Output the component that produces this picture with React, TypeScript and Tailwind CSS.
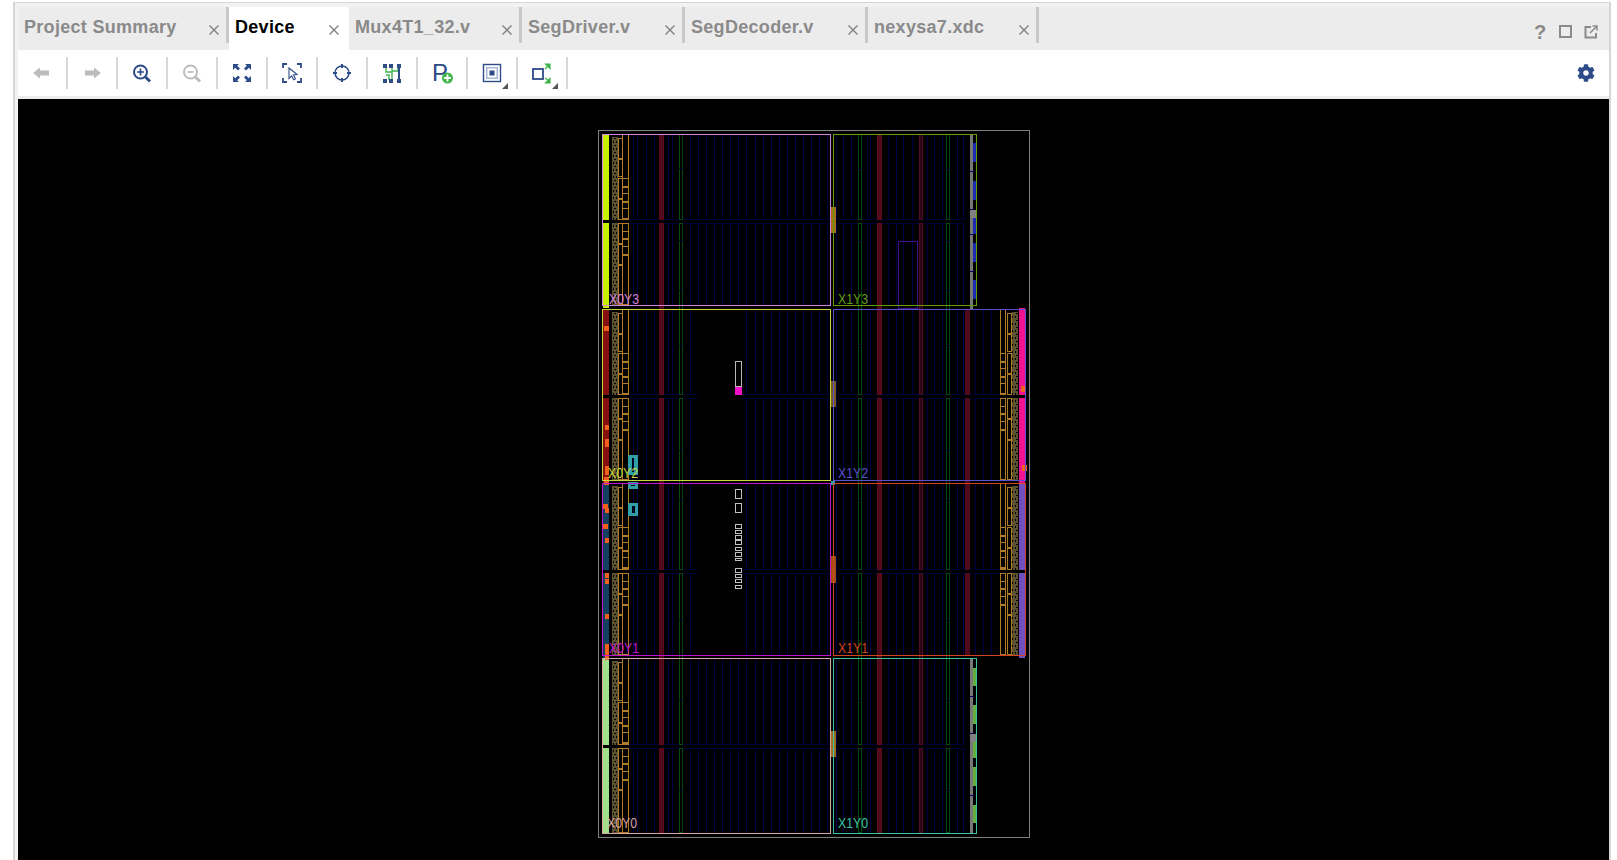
import { FaCog } from "react-icons/fa"

const NAVY = "#2d4b87"
const GRAY = "#bcbcbc"
const GREEN = "#3fb54a"

const tabs = [
  { name: "Project Summary", w: "w-[211px]", active: false, sep: true },
  { name: "Device", w: "w-[120px]", active: true, sep: false },
  { name: "Mux4T1_32.v", w: "w-[173px]", active: false, sep: true },
  { name: "SegDriver.v", w: "w-[163px]", active: false, sep: true },
  { name: "SegDecoder.v", w: "w-[183px]", active: false, sep: true },
  { name: "nexysa7.xdc", w: "w-[171px]", active: false, sep: true },
]

function CloseIcon() {
  return (
    <svg width="12" height="12" viewBox="0 0 12 12" className="mt-[6px] shrink-0">
      <path d="M1.5 1.5l9 9M10.5 1.5l-9 9" stroke="#808080" strokeWidth="1.4" />
    </svg>
  )
}

function Tab({ name, w, active, sep }: { name: string; w: string; active: boolean; sep: boolean }) {
  return (
    <div className={`flex ${w} shrink-0 ${active ? "h-[43px] bg-white pr-[9px]" : "h-[36px] pr-[6px]"} ${sep ? "border-r-[3px] border-[#c8c8c8]" : ""} items-start justify-between pl-[6px] pt-[11px]`}>
      <span className={`text-[18px] font-bold leading-none tracking-[0.3px] ${active ? "text-black" : "text-[#8a8a8a]"}`}>{name}</span>
      <CloseIcon />
    </div>
  )
}

function Icon({ children }: { children: React.ReactNode }) {
  return (
    <svg width="30" height="30" viewBox="-3 -3 30 30">
      {children}
    </svg>
  )
}

function ToolButton({ children, menu }: { children: React.ReactNode; menu?: boolean }) {
  return (
    <div className="relative flex h-[32px] w-[50px] shrink-0 items-center justify-center border-r-2 border-[#d8d8d8]">
      {children}
      {menu && <div className="absolute bottom-0 right-[8px] h-0 w-0 border-b-[6px] border-l-[6px] border-b-[#555555] border-l-transparent" />}
    </div>
  )
}

const toolbarIcons = [
  { menu: false, el: <path d="M3 12l7-5.5V9.5h9v5h-9v3z" fill={GRAY} /> },
  { menu: false, el: <path d="M21 12l-7-5.5V9.5H5v5h9v3z" fill={GRAY} /> },
  {
    menu: false,
    el: (
      <>
        <circle cx="10.5" cy="11" r="6.5" fill="none" stroke={NAVY} strokeWidth="2" />
        <path d="M10.5 7.5v7M7 11h7" stroke={NAVY} strokeWidth="1.7" />
        <path d="M15.5 16l4.5 4.5" stroke={NAVY} strokeWidth="3" />
      </>
    ),
  },
  {
    menu: false,
    el: (
      <>
        <circle cx="10.5" cy="11" r="6.5" fill="none" stroke={GRAY} strokeWidth="2" />
        <path d="M7.5 11h6" stroke={GRAY} strokeWidth="1.7" />
        <path d="M15.5 16l4.5 4.5" stroke={GRAY} strokeWidth="3" />
      </>
    ),
  },
  {
    menu: false,
    el: (
      <path
        d="M3 3h6L7.2 4.8 10 7.6 8 9.6 5.2 6.8 3 9zM21 3v6l-2.2-2.2L16 9.6l-2-2 2.8-2.8L15 3zM3 21v-6l2.2 2.2L8 14.4l2 2-2.8 2.8L9 21zM21 21h-6l1.8-1.8-2.8-2.8 2-2 2.8 2.8L21 15z"
        fill={NAVY}
      />
    ),
  },
  {
    menu: false,
    el: (
      <>
        <path d="M3 7V3h4M17 3h4v4M3 17v4h4M21 17v4h-4" fill="none" stroke={NAVY} strokeWidth="1.8" />
        <path d="M9 7l8 6.5-3.5.5 2 3.8-1.8.9-2-3.8L9 17.5z" fill="white" stroke={NAVY} strokeWidth="1.1" />
      </>
    ),
  },
  {
    menu: false,
    el: (
      <>
        <circle cx="12" cy="12" r="7" fill="none" stroke={NAVY} strokeWidth="1.5" />
        <path d="M12 3v4M12 17v4M3 12h4M17 12h4" stroke={NAVY} strokeWidth="2" />
      </>
    ),
  },
  {
    menu: false,
    el: (
      <>
        <path d="M6 6v5h6v8M12 6v4h6V6M6 14h3v5" fill="none" stroke={GREEN} strokeWidth="1.4" />
        <path d="M3 3h4v4H3zM9 3h4v4H9zM17 3h4v4h-4zM3 18h4v4H3zM9 18h4v4H9zM17 18h4v4h-4z" fill={NAVY} />
        <path d="M19 7v11" stroke={NAVY} strokeWidth="2" />
      </>
    ),
  },
  {
    menu: false,
    el: (
      <>
        <text x="2" y="20" fontSize="24" fontFamily="Liberation Sans, sans-serif" fill={NAVY}>P</text>
        <circle cx="17.5" cy="17" r="5.5" fill={GREEN} />
        <path d="M17.5 13.5v7M14 17h7" stroke="white" strokeWidth="1.8" />
      </>
    ),
  },
  {
    menu: true,
    el: (
      <>
        <rect x="3.5" y="3.5" width="17" height="17" fill="white" stroke={NAVY} strokeWidth="1.4" />
        <rect x="6" y="6" width="12" height="12" fill="#a8b8d4" />
        <rect x="7.5" y="7.5" width="9" height="9" fill="white" />
        <rect x="9.5" y="9.5" width="5" height="5" fill={NAVY} />
      </>
    ),
  },
  {
    menu: true,
    el: (
      <>
        <rect x="3" y="8" width="10" height="10" fill="white" stroke={NAVY} strokeWidth="1.8" />
        <path d="M15 8l4-4M20 3v4.5L15.5 3zM15 17l4 3M20 22v-4.5L15.5 22z" fill={GREEN} stroke={GREEN} strokeWidth="1.2" />
      </>
    ),
  },
]

// clock region outlines, in page coordinates
const regions = [
  { label: "X0Y3", x: 602.5, y: 134.5, w: 228, h: 171, color: "#d184da", tx: 609, ty: 304 },
  { label: "X1Y3", x: 833.5, y: 134.5, w: 143, h: 171, color: "#629c0c", tx: 838, ty: 304 },
  { label: "X0Y2", x: 602.5, y: 309.5, w: 228, h: 171, color: "#c8d83c", tx: 608, ty: 478 },
  { label: "X1Y2", x: 833.5, y: 309.5, w: 192, h: 171, color: "#5a50cc", tx: 838, ty: 478 },
  { label: "X0Y1", x: 602.5, y: 483.5, w: 228, h: 172, color: "#c214cf", tx: 609, ty: 653 },
  { label: "X1Y1", x: 833.5, y: 483.5, w: 192, h: 172, color: "#d2431f", tx: 838, ty: 653 },
  { label: "X0Y0", x: 602.5, y: 658.5, w: 228, h: 175, color: "#dba4a4", tx: 607, ty: 828 },
  { label: "X1Y0", x: 833.5, y: 658.5, w: 143, h: 175, color: "#3cc0a2", tx: 838, ty: 828 },
]

const spans = [
  [134, 220],
  [223, 395],
  [398, 570],
  [573, 745],
  [748, 833],
]
const halves = [
  [134, 220, 223, 305],
  [309, 395, 398, 480],
  [483, 570, 573, 655],
  [658, 745, 748, 833],
]

const leftLines = [633, 637, 646, 654, 668, 672, 690, 698, 706, 714, 722, 730, 738, 746, 755, 763, 771, 779, 787, 795, 803, 811, 819, 827]
const rightLines = [836, 843, 851, 867, 870, 888, 896, 903, 912, 927, 934, 942, 957, 963]
const farLines = [975, 983, 991]

const stripColors = ["#c8f000", "#851010", "#124060", "#a0e088"]
const orangeDotsLeft = [
  [604, 326, 5, 5],
  [605, 425, 4, 5],
  [605, 439, 4, 8],
  [605, 466, 4, 9],
  [604, 477, 5, 8],
  [603, 504, 5, 5],
  [605, 508, 4, 5],
  [603, 524, 5, 5],
  [605, 538, 4, 5],
  [605, 573, 4, 5],
  [605, 579, 4, 5],
  [605, 614, 4, 5],
  [605, 644, 4, 16],
]
const smallBoxes = [
  [489, 10],
  [503, 10],
  [524, 5],
  [530, 4],
  [535, 5],
  [540, 5],
  [547, 4],
  [552, 5],
  [558, 3],
  [568, 5],
  [574, 4],
  [579, 4],
  [585, 4],
]

function Column({ x, w, fill, stroke }: { x: number; w: number; fill: string; stroke: string }) {
  return (
    <>
      {spans.map(([a, b]) => (
        <rect key={a} x={x + 0.5} y={a + 0.5} width={w - 1} height={b - a - 1} fill={fill} stroke={stroke} />
      ))}
    </>
  )
}

function GreenColumn({ x }: { x: number }) {
  const breaks = [168, 240, 290, 345, 450, 500, 620, 700, 790]
  return (
    <>
      <Column x={x} w={4} fill="#000000" stroke="#004a12" />
      {breaks.map((y) => (
        <rect key={y} x={x} y={y} width={4} height={1} fill="#00002e" />
      ))}
    </>
  )
}

// orange slice columns and the olive tile column of one half, top and bottom variants
function SliceColumns({ a, b, c, d, col1, col2, col2w, olive }: { a: number; b: number; c: number; d: number; col1: number; col2: number; col2w: number; olive: number }) {
  const orange = "#b07c28"
  const ticksTop = [a + 52, a + 59, a + 67, a + 74, a + 84]
  const ticksBottom = [c + 8, c + 15, c + 23, c + 31]
  return (
    <g fill="none" stroke={orange}>
      <rect x={olive} y={a + 3} width={6} height={b - a - 3} fill="url(#olive)" stroke="none" />
      <rect x={olive} y={c} width={6} height={d - c} fill="url(#olive)" stroke="none" />
      <rect x={col1 + 0.5} y={a + 4.5} width={4} height={38} />
      <rect x={col1 + 0.5} y={a + 44.5} width={4} height={b - a - 45} />
      <path d={`M${col1} ${a + 24.5}h4M${col1} ${a + 64.5}h4`} strokeWidth="2" />
      <rect x={col1 + 0.5} y={c + 0.5} width={4} height={20} />
      <rect x={col1 + 0.5} y={c + 21.5} width={4} height={20} />
      <rect x={col1 + 0.5} y={c + 42.5} width={4} height={d - c - 43} />
      <rect x={col2 + 0.5} y={a + 0.5} width={col2w - 1} height={44} />
      <rect x={col2 + 0.5} y={a + 44.5} width={col2w - 1} height={b - a - 45} />
      {ticksTop.map((y, i) => (
        <path key={y} d={`M${col2} ${y + 0.5}h${col2w}`} strokeWidth={i % 2 ? 1 : 2} />
      ))}
      <rect x={col2 + 0.5} y={c + 0.5} width={col2w - 1} height={d - c - 1} />
      {ticksBottom.map((y, i) => (
        <path key={y} d={`M${col2} ${y + 0.5}h${col2w}`} strokeWidth={i % 2 ? 2 : 1} />
      ))}
    </g>
  )
}

function DeviceView() {
  return (
    <svg width="1591" height="761" viewBox="18 99 1591 761" shapeRendering="crispEdges" className="block">
      <defs>
        <pattern id="olive" x="0" y="0" width="6" height="7" patternUnits="userSpaceOnUse">
          <rect width="6" height="7" fill="#5c5230" />
          <rect x="1" y="1" width="1" height="2" fill="#000000" />
          <rect x="4" y="1" width="1" height="2" fill="#000000" />
          <rect x="2" y="5" width="2" height="1" fill="#000000" />
        </pattern>
      </defs>

      <rect x="598.5" y="130.5" width="431" height="707" fill="none" stroke="#808080" />

      {/* routing lines, with a hole around the config column */}
      {halves.map(([a, b, c, d], i) => {
        const hole = i === 1 || i === 2
        const x1Lines = hole ? [...rightLines, ...farLines] : rightLines
        const lines = [...leftLines.filter((x) => !hole || x < 697 || x > 742), ...x1Lines]
        const end = hole ? 1000 : 965
        return (
          <g key={a} stroke="#000048">
            {lines.map((x) => (
              <path key={x} d={`M${x + 0.5} ${a}V${b}M${x + 0.5} ${c}V${d}`} />
            ))}
            <path d={`M612 ${b - 0.5}H${hole ? 697 : end}`} stroke="#000038" />
            <path d={`M612 ${c + 0.5}H${hole ? 697 : end}`} stroke="#000038" />
            {hole && <path d={`M742 ${b - 0.5}H${end}M742 ${c + 0.5}H${end}`} stroke="#000038" />}
          </g>
        )
      })}

      <Column x={659} w={5} fill="#4f0a1c" stroke="#5e0a1e" />
      <Column x={877} w={5} fill="#4f0a1c" stroke="#5e0a1e" />
      <Column x={919} w={4} fill="#2a0618" stroke="#4f0a24" />
      <GreenColumn x={679} />
      <GreenColumn x={858} />
      <GreenColumn x={946} />
      {[[309, 395], [398, 570], [573, 655]].map(([a, b]) => (
        <rect key={a} x={965} y={a} width={5} height={b - a} fill="#4f0a1c" />
      ))}

      {/* left IO strips */}
      {halves.map(([a, b, c, d], i) => (
        <g key={a}>
          <rect x={603} y={a} width={6} height={b - a} fill={stripColors[i]} />
          <rect x={603} y={c} width={6} height={i === 3 ? d - c : d - c + 3} fill={stripColors[i]} />
          <SliceColumns a={a} b={b} c={c} d={d} col1={618} col2={622} col2w={7} olive={612} />
        </g>
      ))}

      {/* right IO columns of X1Y2 and X1Y1 */}
      {halves.slice(1, 3).map(([a, b, c, d], i) => (
        <g key={a}>
          <rect x={1019} y={a - 1} width={6} height={b - a + 1} fill={i === 0 ? "#f01392" : "#7050c0"} />
          <rect x={1019} y={c} width={6} height={d - c + 3} fill={i === 0 ? "#f01392" : "#7050c0"} />
          <SliceColumns a={a} b={b} c={c} d={d} col1={1007} col2={1000} col2w={6} olive={1012} />
        </g>
      ))}
      <rect x="1019" y="481" width="6" height="2" fill="#f01392" />
      <rect x="1021" y="386" width="5" height="6" fill="#f0601a" />
      <rect x="1022" y="465" width="5" height="6" fill="#f0601a" />

      {/* right edge columns of X1Y3 and X1Y0 */}
      <rect x="970" y="135" width="3" height="175" fill="#787878" />
      {[[143, 19], [181, 19], [218, 16], [243, 19], [280, 19]].map(([y, h]) => (
        <rect key={y} x={973} y={y} width={3} height={h} fill="#1c2cb0" />
      ))}
      <rect x="970" y="210" width="6" height="8" fill="#808080" />
      {[171, 209, 234, 271].map((y) => (
        <rect key={y} x={970} y={y} width={4} height={1} fill="#000060" />
      ))}
      <rect x="970" y="659" width="3" height="174" fill="#787878" />
      {[[668, 18], [705, 19], [742, 16], [767, 19], [805, 18]].map(([y, h]) => (
        <rect key={y} x={973} y={y} width={3} height={h} fill="#60b040" />
      ))}
      <rect x="970" y="734" width="6" height="8" fill="#808080" />
      {[696, 733, 795].map((y) => (
        <rect key={y} x={970} y={y} width={4} height={1} fill="#000060" />
      ))}

      {/* clock spine blocks */}
      <rect x="831" y="207" width="5" height="26" fill="#a87018" />
      <rect x="831" y="381" width="5" height="26" fill="#7a5c20" />
      <rect x="831" y="556" width="5" height="27" fill="#a05010" />
      <rect x="831" y="731" width="5" height="26" fill="#a07020" />

      {/* teal blocks */}
      <path d="M628 455h10v20h-10zM632 458v14h2v-14z" fill="#2f9ea6" fillRule="evenodd" />
      <rect x="628" y="482" width="10" height="7" fill="#2f9ea6" />
      <rect x="631" y="485" width="4" height="1" fill="#000000" />
      <path d="M628 503h10v13h-10zM632 506v7h3v-7z" fill="#2f9ea6" fillRule="evenodd" />
      <rect x="831" y="481" width="4" height="4" fill="#2f9ea6" />

      {orangeDotsLeft.map(([x, y, w, h]) => (
        <rect key={`${x}-${y}`} x={x} y={y} width={w} height={h} fill="#f0601a" />
      ))}

      {/* placed cells */}
      <rect x="735.5" y="361.5" width="6" height="25" fill="none" stroke="#b8b8b8" />
      <rect x="735" y="387" width="7" height="8" fill="#f010c8" />
      {smallBoxes.map(([y, h]) => (
        <rect key={y} x={735.5} y={y + 0.5} width={6} height={h - 1} fill="none" stroke="#c0c0c0" />
      ))}
      <rect x="898.5" y="241.5" width="19" height="67" fill="none" stroke="#44108a" />

      {regions.map((r) => (
        <rect key={r.label} x={r.x} y={r.y} width={r.w} height={r.h} fill="none" stroke={r.color} />
      ))}
      {regions.map((r) => (
        <text key={r.label} x={r.tx} y={r.ty} fill={r.color} fontSize="14" fontFamily="Liberation Sans, sans-serif" textLength="30" lengthAdjust="spacingAndGlyphs" shapeRendering="auto">
          {r.label}
        </text>
      ))}
    </svg>
  )
}

export default function App() {
  return (
    <div className="h-[860px] w-[1617px] overflow-hidden bg-white pl-[13px] pr-[6px] pt-[2px] font-['Liberation_Sans',sans-serif]">
      <div className="flex h-[858px] flex-col border-x-2 border-t border-[#d6d6d6] bg-[#f2f2f2] pl-[3px] pt-[4px]">
        {/* Tab strip */}
        <div className="flex h-[43px] shrink-0 items-start bg-[#ececec]">
          {tabs.map((t) => (
            <Tab key={t.name} {...t} />
          ))}
          <div className="ml-auto mr-[11px] flex h-[43px] items-center gap-[8px] pt-[6px] text-[#8a8a8a]">
            <span className="w-[14px] text-center text-[20px] font-bold leading-none">?</span>
            <div className="mx-[4px] h-[13px] w-[13px] border-2 border-[#8a8a8a]" />
            <svg width="14" height="14" viewBox="0 0 14 14">
              <path d="M7 2H1.5v10.5H12V8" fill="none" stroke="#8a8a8a" strokeWidth="2" />
              <path d="M6 8l6-6M8.5 1H13v4.5" fill="none" stroke="#8a8a8a" strokeWidth="1.5" />
            </svg>
          </div>
        </div>

        {/* Toolbar */}
        <div className="flex h-[46px] shrink-0 items-center bg-white pb-[1px]">
          {toolbarIcons.map((ic, i) => (
            <ToolButton key={i} menu={ic.menu}>
              <Icon>{ic.el}</Icon>
            </ToolButton>
          ))}
          <FaCog className="ml-auto mr-[14px] text-[18px] text-[#2d4b87]" />
        </div>
        <div className="h-[3px] shrink-0 bg-[#ececec]" />

        {/* Device canvas */}
        <div className="min-h-0 flex-1 bg-black">
          <DeviceView />
        </div>
      </div>
    </div>
  )
}
